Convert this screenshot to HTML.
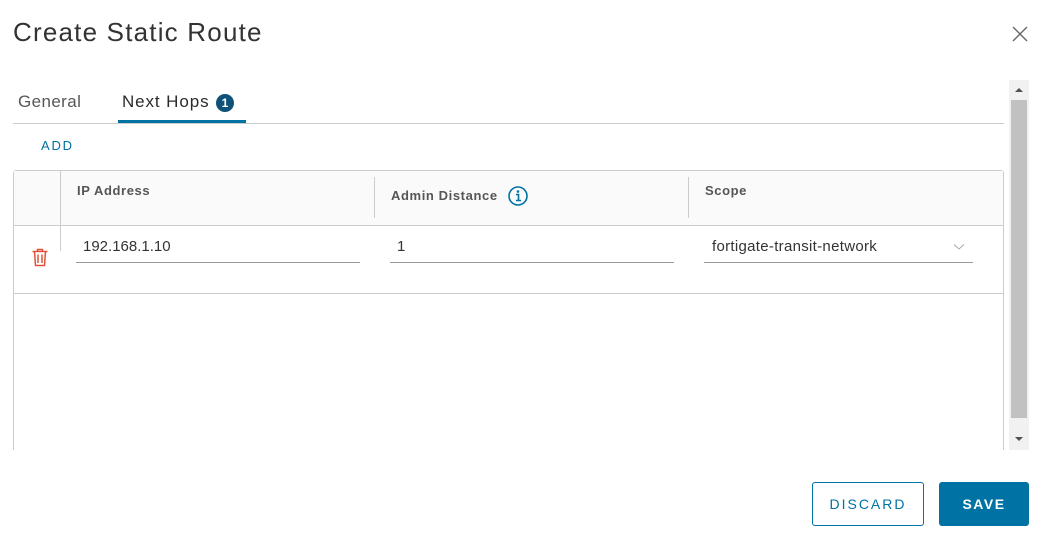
<!DOCTYPE html>
<html><head><style>
*{box-sizing:border-box;margin:0;padding:0}
body{width:1051px;height:545px;background:#fff;font-family:"Liberation Sans",sans-serif;position:relative;overflow:hidden;color:#333}
.a{position:absolute}
</style></head><body>
<div class="a" style="left:13px;top:17px;font-size:26px;color:#333;letter-spacing:1.2px">Create Static Route</div>
<svg class="a" style="left:1011px;top:25px" width="18" height="18" viewBox="0 0 18 18"><path d="M2 2L16 16M16 2L2 16" stroke="#6b6b6b" stroke-width="1.5"/></svg>
<div class="a" style="left:18px;top:92px;font-size:17px;color:#575757;letter-spacing:0.4px">General</div>
<div class="a" style="left:122px;top:92px;font-size:17px;color:#2b2b2b;letter-spacing:0.9px">Next Hops</div>
<div class="a" style="left:216px;top:94px;width:18px;height:18px;border-radius:9px;background:#0f5279;color:#fff;font-size:12px;font-weight:bold;text-align:center;line-height:18px">1</div>
<div class="a" style="left:13px;top:123px;width:991px;height:1px;background:#ccc"></div>
<div class="a" style="left:118px;top:120px;width:128px;height:3px;background:#0072a3"></div>
<div class="a" style="left:41px;top:138px;font-size:13px;color:#0072a3;letter-spacing:1.8px">ADD</div>
<div class="a" style="left:13px;top:170px;width:991px;height:300px;border:1px solid #ccc;border-radius:3px"></div>
<div class="a" style="left:14px;top:171px;width:989px;height:55px;background:#fafafa;border-bottom:1px solid #ccc"></div>
<div class="a" style="left:60px;top:171px;width:1px;height:80px;background:#ccc"></div>
<div class="a" style="left:374px;top:177px;width:1px;height:41px;background:#ccc"></div>
<div class="a" style="left:688px;top:177px;width:1px;height:41px;background:#ccc"></div>
<div class="a" style="left:77px;top:183px;font-size:13px;font-weight:bold;color:#565656;letter-spacing:0.6px">IP Address</div>
<div class="a" style="left:391px;top:188px;font-size:13px;font-weight:bold;color:#565656;letter-spacing:0.6px">Admin Distance</div>
<svg class="a" style="left:507px;top:185px" width="22" height="22" viewBox="0 0 22 22"><circle cx="11" cy="11" r="9" fill="none" stroke="#0072a3" stroke-width="1.6"/><circle cx="11" cy="6.5" r="1.3" fill="#0072a3"/><path d="M9 9.5H11.5V15.5M9 15.5H14" stroke="#0072a3" stroke-width="1.6" fill="none"/></svg>
<div class="a" style="left:705px;top:183px;font-size:13px;font-weight:bold;color:#565656;letter-spacing:0.6px">Scope</div>
<div class="a" style="left:14px;top:293px;width:989px;height:1px;background:#ccc"></div>
<svg class="a" style="left:31px;top:248px" width="18" height="19" viewBox="0 0 18 19"><path d="M1.5 3.5H16.5M6.5 3.5V1.5H11.5V3.5M3.5 3.5L4.5 17.5H13.5L14.5 3.5M7 6.5V15M11 6.5V15" stroke="#e0533b" stroke-width="1.5" fill="none"/></svg>
<div class="a" style="left:83px;top:238px;font-size:15px;color:#333">192.168.1.10</div>
<div class="a" style="left:76px;top:262px;width:284px;height:1px;background:#999"></div>
<div class="a" style="left:397px;top:238px;font-size:15px;color:#333">1</div>
<div class="a" style="left:390px;top:262px;width:284px;height:1px;background:#999"></div>
<div class="a" style="left:712px;top:238px;font-size:15px;color:#333;letter-spacing:0.3px">fortigate-transit-network</div>
<svg class="a" style="left:953px;top:243px" width="12" height="8" viewBox="0 0 12 8"><path d="M1 1.5L6 6L11 1.5" stroke="#aaa" stroke-width="1" fill="none"/></svg>
<div class="a" style="left:704px;top:262px;width:269px;height:1px;background:#999"></div>
<div class="a" style="left:0;top:450px;width:1051px;height:95px;background:#fff"></div>
<div class="a" style="left:1009px;top:80px;width:20px;height:370px;background:#f1f1f1"></div>
<div class="a" style="left:1011px;top:100px;width:16px;height:318px;background:#c1c1c1"></div>
<svg class="a" style="left:1014px;top:86px" width="10" height="8"><path d="M1 6L5 2L9 6Z" fill="#505050"/></svg>
<svg class="a" style="left:1014px;top:435px" width="10" height="8"><path d="M1 2L5 6L9 2Z" fill="#505050"/></svg>
<div class="a" style="left:812px;top:482px;width:112px;height:44px;border:1px solid #0072a3;border-radius:3px;color:#0072a3;font-size:14px;letter-spacing:2px;text-align:center;line-height:42px">DISCARD</div>
<div class="a" style="left:939px;top:482px;width:90px;height:44px;background:#0072a3;border-radius:3px;color:#fff;font-size:14px;font-weight:bold;letter-spacing:1.5px;text-align:center;line-height:44px">SAVE</div>
</body></html>
